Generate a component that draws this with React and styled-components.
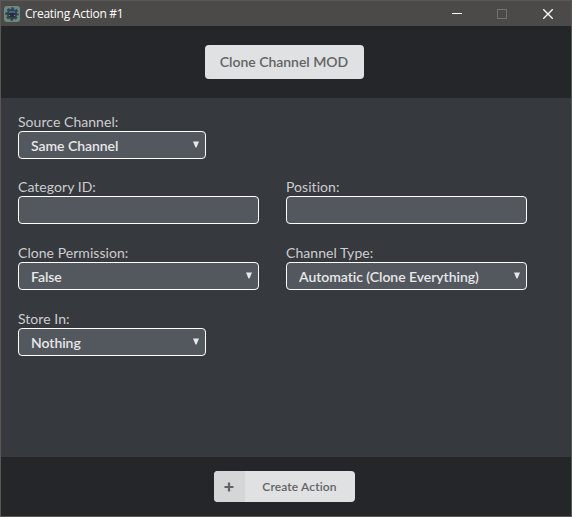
import React from 'react';
import styled, { createGlobalStyle } from 'styled-components';

const GlobalStyle = createGlobalStyle`
  *, *::before, *::after { box-sizing: border-box; }
  body { margin: 0; background: #36393e; }
  button, input, select { font: inherit; margin: 0; }
`;

const Window = styled.div`
  width: 572px;
  height: 517px;
  display: flex;
  flex-direction: column;
  overflow: hidden;
  border: 1px solid #5a5755;
  background: #36393e;
  font-family: Lato, sans-serif;
  font-size: 14px;
`;

const TitleBar = styled.header`
  flex: 0 0 25px;
  display: flex;
  align-items: center;
  padding-left: 3px;
  background: #4c4a48;
  color: #fff;
`;

const Title = styled.span`
  flex: 1;
  margin-left: 5px;
  font: 12px/16px 'Open Sans', 'Noto Sans', sans-serif;
  letter-spacing: -0.26px;
`;

const Controls = styled.div`
  display: flex;
`;

const Control = styled.button`
  width: ${(p) => p.$width || 46}px;
  height: 25px;
  display: grid;
  place-items: center;
  padding: 0;
  border: 0;
  background: none;
  color: ${(p) => (p.$muted ? '#73716f' : '#fff')};
`;

const Strip = styled.div`
  flex: 0 0 ${(p) => p.$height}px;
  display: flex;
  justify-content: center;
  align-items: flex-start;
  padding-top: ${(p) => p.$top}px;
  background: #25262a;
`;

const ModButton = styled.button`
  width: 159px;
  height: 34px;
  padding: 0 1px 0 0;
  margin-right: 3px;
  border: 0;
  border-radius: 4px;
  background: #e0e1e2;
  color: #626364;
  font-size: 14px;
  font-weight: 600;
  line-height: 34px;
  letter-spacing: -0.02px;
`;

const CreateButton = styled.button`
  width: 141px;
  height: 31px;
  display: flex;
  align-items: stretch;
  padding: 0;
  margin-right: 3px;
  overflow: hidden;
  border: 0;
  border-radius: 4px;
  background: #e0e1e2;
  color: #626364;
  font-size: 12px;
  font-weight: 600;
`;

const PlusCell = styled.span`
  width: 31px;
  display: grid;
  place-items: center;
  padding-right: 1px;
  background: #d5d6d7;
`;

const CreateLabel = styled.span`
  flex: 1;
  padding-right: 1px;
  line-height: 31px;
  text-align: center;
  letter-spacing: 0.14px;
`;

const Form = styled.main`
  flex: 1;
  display: grid;
  grid-template-columns: 241px 241px;
  grid-template-rows: 65px 66px 66px 66px;
  column-gap: 27px;
  align-content: start;
  padding: 16px 17px;
`;

const Field = styled.label`
  grid-column: ${(p) => (p.$wide ? '1 / -1' : 'auto')};
  display: flex;
  flex-direction: column;
  align-items: flex-start;
`;

const Caption = styled.span`
  height: 17px;
  line-height: 15px;
  letter-spacing: 0.05px;
  color: #cdcdce;
`;

const SelectWrap = styled.span`
  width: ${(p) => p.$width}px;
  height: 28px;
  display: grid;
  grid-template-columns: 1fr 12px;
  align-items: center;
  border: 1px solid #fff;
  border-radius: 4px;
  background: #53575e;
  color: #e8e8e9;
`;

const Select = styled.select`
  grid-area: 1 / 1 / 2 / 3;
  width: 100%;
  height: 26px;
  padding: 1px 18px 0 12px;
  border: 0;
  outline: 0;
  appearance: none;
  background: transparent;
  color: inherit;
  font-weight: 600;
  letter-spacing: -0.04px;
`;

const Arrow = styled.svg`
  grid-area: 1 / 2;
  display: block;
  margin-bottom: 1px;
  pointer-events: none;
`;

const TextInput = styled.input`
  width: 241px;
  height: 28px;
  padding: 0 12px;
  border: 1px solid #fff;
  border-radius: 4px;
  outline: 0;
  background: #53575e;
  color: #e8e8e9;
`;

function AppIcon() {
  return (
    <svg width="16" height="16" viewBox="0 0 16 16">
      <rect width="16" height="16" rx="3" fill="#668b80" />
      <circle cx="8" cy="8" r="5.2" fill="#3a4048" />
      <circle
        cx="8"
        cy="8"
        r="5.7"
        fill="none"
        stroke="#3a4048"
        strokeWidth="2"
        strokeDasharray="2.6 1.877"
        strokeDashoffset="1.3"
      />
      <path d="M5 5h6v5.5l-1 .5H6l-1-.5z" fill="#272d3b" />
      <path d="M5 5h6v2H5z" fill="#3567a6" />
      <path d="M5 9h1v1H5zM10 9h1v1h-1z" fill="#8792a0" />
    </svg>
  );
}

function SelectField({ label, value, width = 241, wide }) {
  return (
    <Field $wide={wide}>
      <Caption>{label}</Caption>
      <SelectWrap $width={width}>
        <Select defaultValue={value}>
          <option>{value}</option>
        </Select>
        <Arrow width="6" height="7" viewBox="0 0 6 7">
          <path d="M0 0.5h6L3.5 6.5h-1z" fill="currentColor" />
        </Arrow>
      </SelectWrap>
    </Field>
  );
}

function InputField({ label }) {
  return (
    <Field>
      <Caption>{label}</Caption>
      <TextInput type="text" />
    </Field>
  );
}

export default function App() {
  return (
    <>
      <GlobalStyle />
      <Window>
        <TitleBar>
          <AppIcon />
          <Title>Creating Action #1</Title>
          <Controls>
            <Control aria-label="Minimize" $width={44}>
              <svg width="10" height="10" shapeRendering="crispEdges">
                <path d="M0 4.5h10" stroke="currentColor" />
              </svg>
            </Control>
            <Control aria-label="Maximize" $muted>
              <svg width="10" height="10" shapeRendering="crispEdges">
                <path d="M.5.5h9v9h-9z" fill="none" stroke="currentColor" />
              </svg>
            </Control>
            <Control aria-label="Close">
              <svg width="10" height="10">
                <path d="M.3.3l9.4 9.4M9.7.3L.3 9.7" stroke="currentColor" strokeWidth="1.3" />
              </svg>
            </Control>
          </Controls>
        </TitleBar>
        <Strip $height={72} $top={19}>
          <ModButton>Clone Channel MOD</ModButton>
        </Strip>
        <Form>
          <SelectField label="Source Channel:" value="Same Channel" width={188} wide />
          <InputField label="Category ID:" />
          <InputField label="Position:" />
          <SelectField label="Clone Permission:" value="False" />
          <SelectField label="Channel Type:" value="Automatic (Clone Everything)" />
          <SelectField label="Store In:" value="Nothing" width={188} wide />
        </Form>
        <Strip $height={59} $top={14}>
          <CreateButton>
            <PlusCell>
              <svg width="10" height="10" viewBox="0 0 10 10">
                <path d="M5 .5v9M.5 5h9" stroke="currentColor" strokeWidth="2.2" />
              </svg>
            </PlusCell>
            <CreateLabel>Create Action</CreateLabel>
          </CreateButton>
        </Strip>
      </Window>
    </>
  );
}
